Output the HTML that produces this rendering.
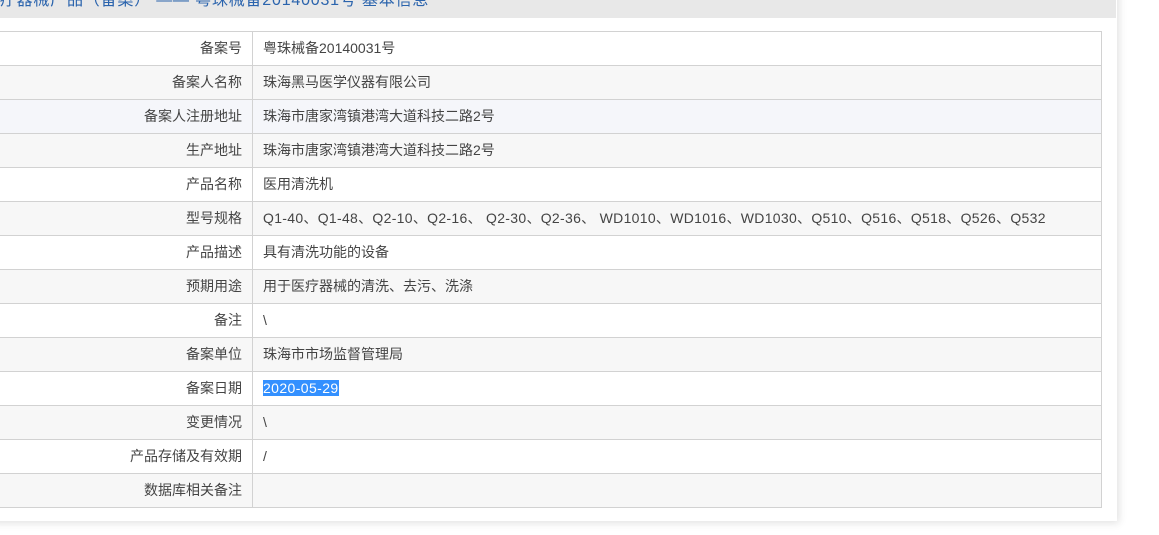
<!DOCTYPE html>
<html><head><meta charset="utf-8"><style>
html,body{margin:0;padding:0;width:1159px;height:535px;overflow:hidden;background:#fff;font-family:"Liberation Sans","Noto Sans CJK SC",sans-serif;}
.panel{position:absolute;left:-10px;top:-20px;width:1127px;height:541px;background:#fff;box-shadow:2px 2px 8px rgba(0,0,0,0.12);}
.hdr{position:absolute;left:0;top:0;width:1116px;height:18px;background:#e8e8e8;overflow:hidden;}
.hdr span{position:absolute;left:-17px;top:-12px;font-size:16px;color:#2b64ad;white-space:nowrap;line-height:26px;letter-spacing:0.8px;}
table{position:absolute;left:-2px;top:31px;border-collapse:collapse;width:1104px;font-size:14px;color:#444;}
td{height:33px;border:1px solid #d2d2d2;padding:0;line-height:33px;}
td.l{width:243px;text-align:right;padding-right:10px;}
td.v{padding-left:10px;}
tr:nth-child(even){background:#f7f7f7;}
tr.h{background:#f5f6fa !important;}
.sel{background:#3390ff;color:#fff;letter-spacing:0.4px;}
.ls{letter-spacing:0.3px;}
</style></head><body>
<div class="panel"></div>
<div class="hdr"><span>医疗器械产品（备案） —— 粤珠械备20140031号 基本信息</span></div>
<table>
<tr><td class="l">备案号</td><td class="v">粤珠械备20140031号</td></tr>
<tr><td class="l">备案人名称</td><td class="v">珠海黑马医学仪器有限公司</td></tr>
<tr class="h"><td class="l">备案人注册地址</td><td class="v">珠海市唐家湾镇港湾大道科技二路2号</td></tr>
<tr><td class="l">生产地址</td><td class="v">珠海市唐家湾镇港湾大道科技二路2号</td></tr>
<tr style="background:#fff"><td class="l">产品名称</td><td class="v">医用清洗机</td></tr>
<tr><td class="l">型号规格</td><td class="v ls">Q1-40、Q1-48、Q2-10、Q2-16、 Q2-30、Q2-36、 WD1010、WD1016、WD1030、Q510、Q516、Q518、Q526、Q532</td></tr>
<tr style="background:#fff"><td class="l">产品描述</td><td class="v">具有清洗功能的设备</td></tr>
<tr><td class="l">预期用途</td><td class="v">用于医疗器械的清洗、去污、洗涤</td></tr>
<tr style="background:#fff"><td class="l">备注</td><td class="v">\</td></tr>
<tr><td class="l">备案单位</td><td class="v">珠海市市场监督管理局</td></tr>
<tr style="background:#fff"><td class="l">备案日期</td><td class="v"><span class="sel">2020-05-29</span></td></tr>
<tr><td class="l">变更情况</td><td class="v">\</td></tr>
<tr style="background:#fff"><td class="l">产品存储及有效期</td><td class="v">/</td></tr>
<tr><td class="l">数据库相关备注</td><td class="v"></td></tr>
</table>
</body></html>
